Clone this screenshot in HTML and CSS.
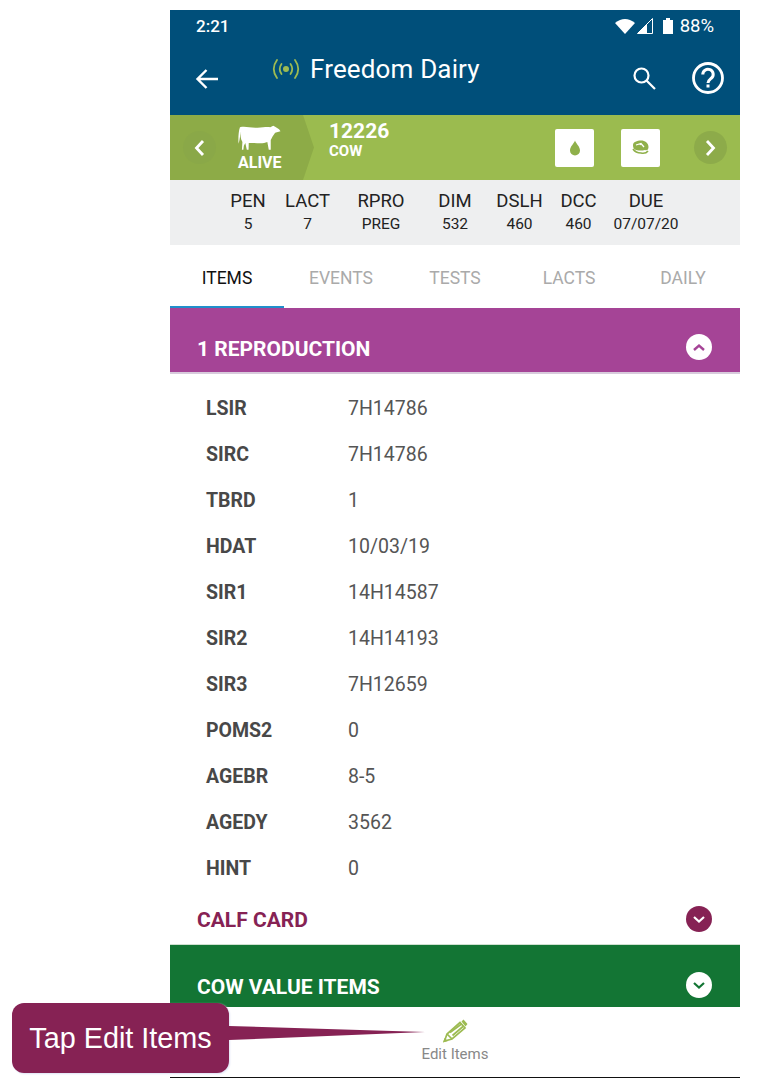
FILE: index.html
```html
<!DOCTYPE html>
<html lang="en">
<head>
    <meta charset="UTF-8">
    <title>Freedom Dairy</title>
    <meta name="viewport" content="width=device-width, initial-scale=1.0">
    <link rel="stylesheet" href="styles.css">
</head>
<body>
    <div class="phone">
        <header class="appbar">
            <div class="statusbar">
                <span class="time">2:21</span>
                <div class="status-icons">
                    <svg class="ic-wifi" width="20" height="16" viewBox="0 0 20 16"><path d="M0 5 Q10 -3 20 5 L10 16 Z" fill="#fff"/></svg>
                    <svg class="ic-signal" width="16" height="16" viewBox="0 0 16 16"><path d="M15.500 .5 V15.500 H.5 Z" fill="none" stroke="#fff" stroke-width="1"/><path d="M10 6 V15.500 H.5 Z" fill="#fff"/></svg>
                    <svg class="ic-battery" width="10" height="16" viewBox="0 0 10 16"><path d="M3 0 H7 V2 H10 V16 H0 V2 H3 Z" fill="#fff"/></svg>
                    <span class="battery">88%</span>
                </div>
            </div>
            <div class="toolbar">
                <svg class="back" width="24" height="22" viewBox="0 0 24 22"><path d="M23 11 H3 M11.500 2 L2.500 11 L11.500 20" fill="none" stroke="#fff" stroke-width="2.400"/></svg>
                <div class="title">
                    <svg width="30" height="22" viewBox="0 0 30 22"><g fill="none" stroke="#9dbb52" stroke-width="1.800" stroke-linecap="round"><path d="M6 2 Q-.5 11 6 20"/><path d="M10.500 6 Q7 11 10.500 16"/><path d="M24 2 Q30.500 11 24 20"/><path d="M19.500 6 Q23 11 19.500 16"/></g><circle cx="15" cy="11" r="3" fill="#9dbb52"/></svg>
                    <span>Freedom Dairy</span>
                </div>
                <svg class="search" width="24" height="24" viewBox="0 0 24 24"><circle cx="9.500" cy="9.500" r="7" fill="none" stroke="#fff" stroke-width="2.200"/><path d="M14.500 14.500 L23 23" stroke="#fff" stroke-width="2.200"/></svg>
                <svg class="help" width="32" height="32" viewBox="0 0 32 32"><circle cx="16" cy="16" r="14.500" fill="none" stroke="#fff" stroke-width="2.800"/><path d="M10.800 12.500 A5.200 5 0 1 1 19.500 16 C17 18 16 18.500 16 21" fill="none" stroke="#fff" stroke-width="3"/><rect x="14.500" y="22.500" width="3" height="3" fill="#fff"/></svg>
            </div>
        </header>

        <div class="cowbar">
            <div class="cowpanel">
                <div class="round-btn">
                    <svg width="11" height="18" viewBox="0 0 11 18"><path d="M9 2 L2.500 9 L9 16" fill="none" stroke="#fff" stroke-width="2.800"/></svg>
                </div>
                <div class="cowstatus">
                    <svg width="43" height="26" viewBox="0 0 44 26"><path d="M2 2 C8 .5 12 3 20 2.500 C26 2 30 1.500 33 2 L36 .5 L38 1.500 L42 4 L43.500 6 L38 7.500 C36 10 34.500 13 33.500 15 L33.500 25 L31.500 25 L30 17 C26 19 20 18 15 18 L11 18 L10.800 25 L9 25 L7.500 18 L6 21 L5.500 25 L4 25 L4.500 17 C2.500 14 2.500 9 2.500 6 C2.200 10 2 15 .5 19 C.2 13 .5 6 2 2 Z" fill="#fff"/></svg>
                    <span>ALIVE</span>
                </div>
            </div>
            <div class="cowid">
                <strong>12226</strong>
                <span>COW</span>
            </div>
            <div class="tilebtn">
                <svg width="12" height="16" viewBox="0 0 12 16"><path d="M6 .5 C7 3.500 11 6.500 11 10.500 A5 5 0 0 1 1 10.500 C1 6.500 5 3.500 6 .5 Z" fill="#8fb04a"/></svg>
            </div>
            <div class="tilebtn">
                <svg width="17" height="15" viewBox="0 0 17 15"><path d="M1 5 C1 2 5 .5 9 .5 C13 .5 16.500 3 16.500 7 C16.500 9.500 15 11 13 10 C9 11 5 10.500 3 9.500 C1.500 8.500 1 7 1 5 Z" fill="#8fb04a"/><path d="M4 5 L9 3.500 L12 7 M9 3.500 L8 5" stroke="#fff" stroke-width="1.300" fill="none"/><path d="M1 9 C3 12 6 13 9 13 C12 13.500 14.500 13 16 11" stroke="#8fb04a" stroke-width="1.600" fill="none"/></svg>
            </div>
            <div class="round-btn next">
                <svg width="11" height="18" viewBox="0 0 11 18"><path d="M2 2 L8.500 9 L2 16" fill="none" stroke="#fff" stroke-width="2.800"/></svg>
            </div>
        </div>

        <div class="stats">
            <div class="stat"><span>PEN</span><small>5</small></div>
            <div class="stat"><span>LACT</span><small>7</small></div>
            <div class="stat"><span>RPRO</span><small>PREG</small></div>
            <div class="stat"><span>DIM</span><small>532</small></div>
            <div class="stat"><span>DSLH</span><small>460</small></div>
            <div class="stat"><span>DCC</span><small>460</small></div>
            <div class="stat"><span>DUE</span><small>07/07/20</small></div>
        </div>

        <nav class="tabs">
            <div class="tab active">ITEMS</div>
            <div class="tab">EVENTS</div>
            <div class="tab">TESTS</div>
            <div class="tab">LACTS</div>
            <div class="tab">DAILY</div>
        </nav>

        <div class="sec-head repro">
            <span>1 REPRODUCTION</span>
            <div class="toggle">
                <svg width="14" height="9" viewBox="0 0 14 9"><path d="M2 7 L7 2.500 L12 7" fill="none" stroke="#a54496" stroke-width="2.400"/></svg>
            </div>
        </div>

        <div class="items">
            <div class="item"><b>LSIR</b><span>7H14786</span></div>
            <div class="item"><b>SIRC</b><span>7H14786</span></div>
            <div class="item"><b>TBRD</b><span>1</span></div>
            <div class="item"><b>HDAT</b><span>10/03/19</span></div>
            <div class="item"><b>SIR1</b><span>14H14587</span></div>
            <div class="item"><b>SIR2</b><span>14H14193</span></div>
            <div class="item"><b>SIR3</b><span>7H12659</span></div>
            <div class="item"><b>POMS2</b><span>0</span></div>
            <div class="item"><b>AGEBR</b><span>8-5</span></div>
            <div class="item"><b>AGEDY</b><span>3562</span></div>
            <div class="item"><b>HINT</b><span>0</span></div>
        </div>

        <div class="sec-head calf">
            <span>CALF CARD</span>
            <div class="toggle">
                <svg width="14" height="9" viewBox="0 0 14 9"><path d="M2 2 L7 6.500 L12 2" fill="none" stroke="#fff" stroke-width="2.200"/></svg>
            </div>
        </div>

        <div class="sec-head value">
            <span>COW VALUE ITEMS</span>
            <div class="toggle">
                <svg width="14" height="9" viewBox="0 0 14 9"><path d="M2 2 L7 6.500 L12 2" fill="none" stroke="#137534" stroke-width="2.200"/></svg>
            </div>
        </div>

        <div class="bottombar">
            <svg width="26" height="24" viewBox="0 0 26 24"><g fill="none" stroke="#9dbb52" stroke-width="1.700"><path d="M2.500 22 L5 15 L18 3.500 L23 9 L10 20 Z"/><path d="M5 15 L10 20"/><path d="M8 13.500 L19.500 5 M10.500 16.500 L21 7.500"/></g><path d="M19.500 2.500 L21.500 .5 L25.500 5 L23.500 7.500 Z M1 23.500 L2.500 19 L6 22 Z" fill="#9dbb52"/></svg>
            <span>Edit Items</span>
        </div>
    </div>

    <!-- callout sits over the page -->
    <div class="callout">Tap Edit Items</div>
    <svg class="callout-tail" width="200" height="20" viewBox="0 0 200 20"><path d="M0 2 L196 8 L0 16 Z" fill="#862254"/></svg>
</body>
</html>
```
FILE: styles.css
```css
body {
    font-family: Roboto, "Liberation Sans", sans-serif;
    margin: 0;
    padding: 0;
    background-color: #fff;
}

.phone {
    width: 570px;
    height: 1068px;
    margin: 10px 0 0 170px;
    display: flex;
    flex-direction: column;
    overflow: hidden;
}

.appbar {
    height: 105px;
    background-color: #004f7a;
    color: #fff;
}

.statusbar {
    height: 32px;
    display: flex;
    justify-content: space-between;
    align-items: center;
    padding: 0 26px 0 26px;
}

.time {
    font-size: 17px;
    font-weight: 500;
}

.status-icons {
    display: flex;
    align-items: center;
}

.ic-signal {
    margin-left: 2px;
}

.ic-battery {
    margin-left: 10px;
}

.battery {
    font-size: 18.500px;
    margin-left: 7px;
}

.toolbar {
    display: flex;
    height: 73px;
    align-items: center;
    padding: 0 16px 0 25px;
}

.back {
    margin-top: 1px;
}

.title {
    display: flex;
    align-items: center;
    gap: 9px;
    margin: -19px 0 0 52px;
    flex: 1;
    font-size: 26px;
    letter-spacing: .15px;
}

.search {
    margin: -1px 36px 0 0;
}

.help {
    margin-top: -1px;
}

.cowbar {
    height: 65px;
    background-color: #9bbb4f;
    display: flex;
    align-items: center;
    color: #fff;
}

.cowpanel {
    width: 144px;
    height: 65px;
    background-color: #8dab47;
    clip-path: polygon(0 0, 133px 0, 144px 50%, 133px 100%, 0 100%);
    display: flex;
    align-items: center;
    padding-left: 13px;
    box-sizing: border-box;
}

.round-btn {
    width: 33px;
    height: 33px;
    border-radius: 50%;
    background-color: #8aa848;
    display: flex;
    align-items: center;
    justify-content: center;
    flex-shrink: 0;
}

.round-btn.next {
    background-color: #8dab4a;
    margin-left: 7px;
}

.cowstatus {
    display: flex;
    flex-direction: column;
    align-items: center;
    margin-left: 22px;
    font-size: 16px;
    font-weight: 700;
    gap: 2px;
    padding-top: 2px;
}

.cowid {
    width: 226px;
    margin-left: 15px;
    display: flex;
    flex-direction: column;
    align-self: flex-start;
    padding-top: 4px;
}

.cowid strong {
    font-size: 21px;
    line-height: 24px;
}

.cowid span {
    font-size: 15px;
    font-weight: 700;
    line-height: 17px;
}

.tilebtn {
    width: 39px;
    height: 38px;
    background-color: #fff;
    border-radius: 2px;
    display: flex;
    align-items: center;
    justify-content: center;
    margin-right: 27px;
}

.stats {
    height: 65px;
    background-color: #eeeff0;
    display: grid;
    grid-template-columns: 36px 45px 64px 46px 45px 35px 62px;
    column-gap: 19px;
    padding-left: 60px;
    align-items: start;
    padding-top: 10px;
    box-sizing: border-box;
}

.stat {
    display: flex;
    flex-direction: column;
    align-items: center;
    color: #222;
}

.stat span {
    font-size: 18.500px;
    line-height: 22px;
}

.stat small {
    font-size: 15.500px;
    line-height: 24px;
    white-space: nowrap;
}

.tabs {
    height: 63px;
    display: grid;
    grid-template-columns: repeat(5, 114px);
}

.tab {
    display: flex;
    align-items: center;
    justify-content: center;
    font-size: 17.500px;
    color: #aaa;
    padding-top: 3px;
    box-sizing: border-box;
}

.tab.active {
    color: #111;
    border-bottom: 2px solid #1f8ecb;
    padding-top: 5px;
}

.sec-head {
    display: flex;
    justify-content: space-between;
    align-items: center;
    padding: 0 28px 0 27px;
    box-sizing: border-box;
    font-size: 21px;
    font-weight: 700;
}

.sec-head span {
    line-height: 24px;
}

.toggle {
    width: 26px;
    height: 26px;
    border-radius: 50%;
    background-color: #fff;
    display: flex;
    align-items: center;
    justify-content: center;
    margin-bottom: 4px;
}

.sec-head.repro {
    height: 66px;
    padding-top: 18px;
    background-color: #a54496;
    border-bottom: 2px solid #d8cbdc;
    color: #fff;
}

.sec-head.calf {
    height: 54px;
    padding-top: 5px;
    color: #862254;
    border-bottom: 1px solid #cfe0d0;
}

.calf .toggle {
    background-color: #862254;
    margin-bottom: 2px;
}

.sec-head.value {
    height: 62px;
    padding-top: 22px;
    background-color: #137534;
    color: #fff;
}

.items {
    padding-top: 11px;
}

.item {
    height: 46px;
    display: flex;
    align-items: center;
    padding-left: 36px;
    font-size: 19.500px;
    color: #555;
}

.item b {
    width: 142px;
    color: #484848;
    font-weight: 700;
}

.bottombar {
    flex: 1;
    display: flex;
    flex-direction: column;
    align-items: center;
    gap: 2px;
    border-bottom: 1px solid #111;
    padding-top: 12px;
    box-sizing: border-box;
    font-size: 15px;
    color: #888;
    line-height: 18px;
}

.callout {
    position: absolute;
    left: 12px;
    top: 1003px;
    width: 217px;
    height: 70px;
    background-color: #862254;
    border-radius: 12px;
    box-shadow: 1px 1px 2px #dfe3f5;
    color: #fff;
    font-family: "Liberation Sans", sans-serif;
    font-size: 28.800px;
    display: flex;
    align-items: center;
    justify-content: center;
}

.callout-tail {
    position: absolute;
    left: 229px;
    top: 1024px;
}
```
